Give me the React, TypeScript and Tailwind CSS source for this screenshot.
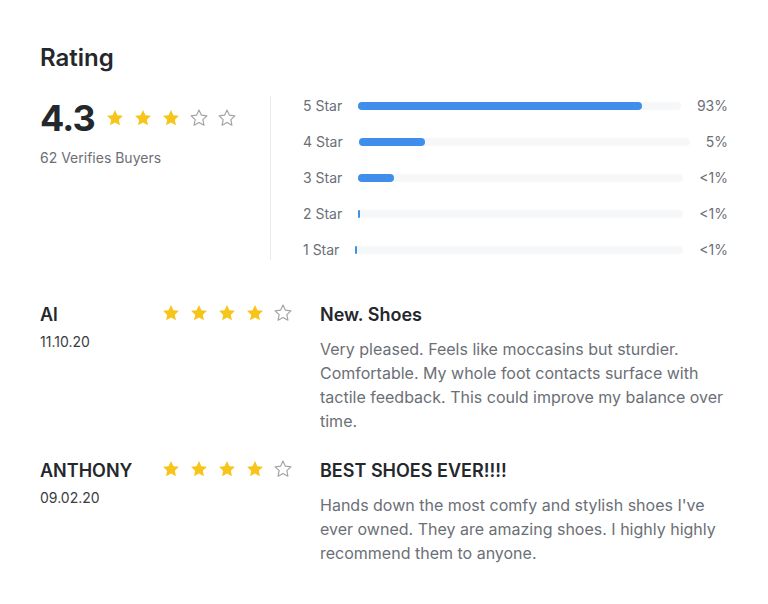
import React from "react";

const STAR = "M12 2.5l2.9 6.1 6.6.8-4.9 4.6 1.3 6.6L12 17.3l-5.9 3.3 1.3-6.6-4.9-4.6 6.6-.8z";

function Star({ filled }: { filled: boolean }) {
  return (
    <svg viewBox="0 0 24 24" className="w-[20px] h-[20px]">
      {filled ? (
        <path d={STAR} fill="#f7c41a" />
      ) : (
        <path d={STAR} fill="none" stroke="#a3a3a3" strokeWidth="1.4" strokeLinejoin="round" />
      )}
    </svg>
  );
}

function Stars({ value }: { value: number }) {
  return (
    <div className="flex items-center gap-[8px]">
      {[1, 2, 3, 4, 5].map((i) => (
        <Star key={i} filled={i <= value} />
      ))}
    </div>
  );
}

const bars = [
  { label: "5 Star", fill: "88%", pct: "93%" },
  { label: "4 Star", fill: "20%", pct: "5%" },
  { label: "3 Star", fill: "11%", pct: "<1%" },
  { label: "2 Star", fill: "2px", pct: "<1%" },
  { label: "1 Star", fill: "2px", pct: "<1%" },
];

const reviews = [
  {
    name: "Al",
    date: "11.10.20",
    stars: 4,
    title: "New. Shoes",
    body: "Very pleased. Feels like moccasins but sturdier. Comfortable. My whole foot contacts surface with tactile feedback. This could improve my balance over time.",
  },
  {
    name: "ANTHONY",
    date: "09.02.20",
    stars: 4,
    title: "BEST SHOES EVER!!!!",
    body: "Hands down the most comfy and stylish shoes I've ever owned. They are amazing shoes. I highly highly recommend them to anyone.",
  },
];

export default function App() {
  return (
    <div className="min-h-screen bg-white px-10 pt-[42px] font-['Inter',sans-serif] text-[#24272c]">
      <h1 className="text-2xl font-semibold leading-8">Rating</h1>

      <div className="mt-[22px] flex">
        <div className="w-[231px] border-r border-[#ebebeb]">
          <div className="flex items-center gap-[10px] h-[44px]">
            <span className="text-[36px] font-bold leading-10 tracking-tight">4.3</span>
            <Stars value={3} />
          </div>
          <p className="mt-[8px] text-sm text-[#6b6f76]">62 Verifies Buyers</p>
        </div>

        <div className="flex-1 pl-8 flex flex-col gap-4">
          {bars.map((b) => (
            <div key={b.label} className="flex items-center gap-4 h-5 text-sm text-[#6b6f76]">
              <span>{b.label}</span>
              <div className="flex-1 h-2 rounded-full bg-[#f6f7f8]">
                <div className="h-2 rounded-full bg-[#3f8eec]" style={{ width: b.fill }} />
              </div>
              <span className="text-right">{b.pct}</span>
            </div>
          ))}
        </div>
      </div>

      <div className="mt-[41px] flex flex-col gap-6">
        {reviews.map((r) => (
          <div key={r.name} className="flex">
            <div className="w-[121px]">
              <div className="text-lg font-semibold leading-7">{r.name}</div>
              <div className="mt-[3px] text-sm text-[#3a3d42]">{r.date}</div>
            </div>
            <div className="w-[159px] pt-[2px]">
              <Stars value={r.stars} />
            </div>
            <div className="flex-1">
              <div className="text-lg font-semibold leading-7">{r.title}</div>
              <p className="mt-2 text-base leading-6 text-[#6b6f76]">{r.body}</p>
            </div>
          </div>
        ))}
      </div>
    </div>
  );
}
